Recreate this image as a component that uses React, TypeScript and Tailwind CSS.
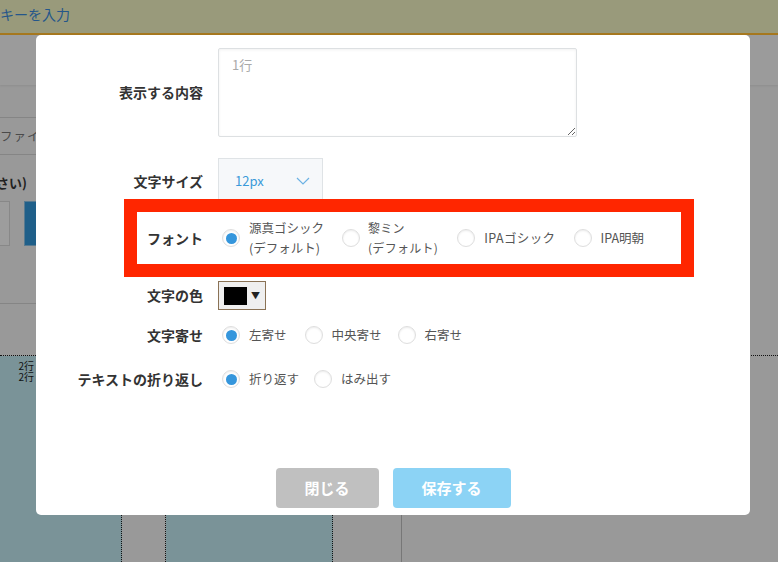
import React from "react";

const FONT = { fontFamily: '"Noto Sans CJK JP", "Noto Sans", sans-serif' };

function Radio({ checked }: { checked?: boolean }) {
  return (
    <span className="w-[18px] h-[18px] rounded-full border border-[#dedede] bg-white shadow-[inset_0_1px_2px_rgba(0,0,0,0.08)] flex items-center justify-center shrink-0">
      {checked && <span className="w-[11px] h-[11px] rounded-full bg-[#3596dc]" />}
    </span>
  );
}

function Label({ children }: { children: React.ReactNode }) {
  return (
    <div className="w-[182px] pr-[15px] shrink-0 text-right text-[14px] font-bold text-[#333]">
      {children}
    </div>
  );
}

function RadioGroup({ items, gaps }: { items: string[]; gaps: number[] }) {
  return (
    <div className="flex items-center pl-[4px]">
      {items.map((t, i) => (
        <div key={t} className="flex items-center" style={{ marginLeft: i === 0 ? 0 : gaps[i - 1] }}>
          <Radio checked={i === 0} />
          <span className="ml-[9px] text-[12.5px] text-[#555] whitespace-nowrap">{t}</span>
        </div>
      ))}
    </div>
  );
}

export default function App() {
  return (
    <div className="relative w-[778px] h-[562px] overflow-hidden bg-[#999999]" style={FONT}>
      {/* page behind the dialog */}
      <div className="h-[35px] bg-[#999a7b] border-b-2 border-[#a6781f] flex items-center">
        <span className="text-[14px] text-[#24568a] pb-[4px]">キーを入力</span>
      </div>
      <div className="h-[50px] bg-[#9b9b9b] shadow-[0_1px_2px_rgba(0,0,0,0.08)]" />
      <div className="h-[270px] w-[420px] pt-[32px]">
        <div className="border-t border-[#858585] h-[37px] flex items-center">
          <span className="text-[12.5px] text-[#4a4a4a] tracking-[1px]">ファイル選択</span>
        </div>
        <div className="border-t border-[#858585] h-[149px] pt-[18px]">
          <div className="w-[27px] flex justify-end">
            <span className="text-[13px] font-bold text-[#222] whitespace-nowrap">ください)</span>
          </div>
          <div className="mt-[8px] flex h-[45px]">
            <div className="w-[10px] bg-[#9d9d9d] border border-l-0 border-[#888]" />
            <div className="ml-[14px] w-[80px] bg-[#1f5f89] border border-[#587a90]" />
          </div>
        </div>
        <div className="border-t border-[#858585]" />
      </div>
      <div className="h-[207px] border-t border-dotted border-[#111] flex">
        <div className="w-[122px] bg-[#7a9398] border-r border-dotted border-[#111]">
          <div className="w-[34px] text-right text-[10px] leading-[11px] text-[#111] pt-[4px]">
            2行
            <br />
            2行
          </div>
        </div>
        <div className="w-[44px] border-r border-dotted border-[#111]" />
        <div className="w-[167px] bg-[#7a9398] border-r border-dotted border-[#111]" />
        <div className="w-[69px] border-r border-[#777]" />
        <div className="flex-1" />
      </div>

      {/* dialog */}
      <div className="absolute left-[36px] top-[35px] w-[714px] h-[480px] bg-white rounded-[5px] flex flex-col pt-[13px] pb-[7px]">
        <div className="flex items-center">
          <Label>表示する内容</Label>
          <textarea
            placeholder="1行"
            className="w-[359px] h-[89px] border border-[#dde0e2] rounded-[2px] shadow-[inset_0_1px_3px_rgba(0,0,0,0.06)] px-[13px] py-[6px] text-[13px] text-[#333] placeholder:text-[#aaa] outline-none"
          />
        </div>

        <div className="flex items-center mt-[21px]">
          <Label>文字サイズ</Label>
          <div className="w-[105px] h-[46px] bg-[#f6f8fa] border border-[#dfe3e6] flex items-center pl-[16px] pr-[12px] justify-between">
            <span className="text-[13px] text-[#3a9ad9]">12px</span>
            <svg width="14" height="8" viewBox="0 0 14 8" fill="none">
              <polyline points="1,1 7,7 13,1" stroke="#6cb2e4" strokeWidth="1.2" />
            </svg>
          </div>
        </div>

        <div className="relative mt-[8px] ml-[101px] w-[544px] h-[52px] bg-white outline outline-[13px] outline-[#ff2600] flex items-center">
          <div className="w-[81px] pr-[15px] shrink-0 text-right text-[14px] font-bold text-[#333]">フォント</div>
          <div className="flex items-center pl-[4px]">
            <div className="flex items-center">
              <Radio checked />
              <span className="ml-[9px] text-[12.5px] leading-[20px] text-[#555] whitespace-nowrap">
                源真ゴシック
                <br />
                (デフォルト)
              </span>
            </div>
            <div className="flex items-center ml-[18px]">
              <Radio />
              <span className="ml-[8px] text-[12px] leading-[20px] text-[#555] whitespace-nowrap tracking-[0.3px]">
                黎ミン
                <br />
                (デフォルト)
              </span>
            </div>
            <div className="flex items-center ml-[19px]">
              <Radio />
              <span className="ml-[9px] text-[12.5px] text-[#555] whitespace-nowrap tracking-[0.4px]">IPAゴシック</span>
            </div>
            <div className="flex items-center ml-[18px]">
              <Radio />
              <span className="ml-[9px] text-[12.5px] text-[#555] whitespace-nowrap">IPA明朝</span>
            </div>
          </div>
        </div>

        <div className="flex items-center mt-[17px]">
          <Label>文字の色</Label>
          <div className="w-[48px] h-[29px] bg-[#efefef] border border-[#8a7255] flex items-center pl-[5px]">
            <span className="w-[23px] h-[18px] bg-black" />
            <span className="ml-[4px] text-[9px] text-[#222]">▼</span>
          </div>
        </div>

        <div className="flex items-center mt-[15px] h-[20px]">
          <Label>文字寄せ</Label>
          <RadioGroup items={["左寄せ", "中央寄せ", "右寄せ"]} gaps={[18, 16]} />
        </div>

        <div className="flex items-center mt-[24px] h-[20px]">
          <Label>テキストの折り返し</Label>
          <RadioGroup items={["折り返す", "はみ出す"]} gaps={[15]} />
        </div>

        <div className="mt-auto flex justify-center gap-[14px]">
          <button className="w-[103px] h-[40px] rounded-[4px] bg-[#c0c0c0] text-white text-[15px] font-bold">閉じる</button>
          <button className="w-[118px] h-[40px] rounded-[4px] bg-[#8cd3f5] text-white text-[15px] font-bold">保存する</button>
        </div>
      </div>
    </div>
  );
}
